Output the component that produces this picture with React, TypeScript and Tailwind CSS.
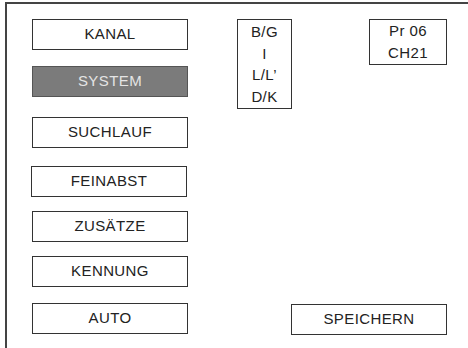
import React from "react";

const menu = [
  { label: "KANAL", mt: "mt-0", shift: "" },
  { label: "SYSTEM", mt: "mt-[16px]", shift: "", active: true },
  { label: "SUCHLAUF", mt: "mt-[20px]", shift: "" },
  { label: "FEINABST", mt: "mt-[18px]", shift: "-ml-px" },
  { label: "ZUSÄTZE", mt: "mt-[14px]", shift: "" },
  { label: "KENNUNG", mt: "mt-[14px]", shift: "" },
  { label: "AUTO", mt: "mt-[16px]", shift: "" },
];

function MenuButton({ label, active, className }: { label: string; active?: boolean; className?: string }) {
  return (
    <div
      className={
        "flex h-[31px] w-[156px] items-center justify-center border " +
        (active
          ? "border-[#555] bg-[#7b7b7b] text-[#e4e4e4] "
          : "border-[#333] bg-white text-[#222] ") +
        (className ?? "")
      }
    >
      {label}
    </div>
  );
}

export default function App() {
  return (
    <div
      className="h-[348px] w-[468px] overflow-hidden bg-white text-[15px] tracking-[0.4px]"
      style={{ fontFamily: '"Liberation Sans", Arial, sans-serif' }}
    >
      <div className="ml-[5px] mt-[2px] flex h-[346px] border-l-2 border-t-2 border-[#444] pl-[25px] pt-[15px]">
        {/* left menu column */}
        <div className="flex flex-col">
          {menu.map((m) => (
            <MenuButton
              key={m.label}
              label={m.label}
              active={m.active}
              className={m.mt + " " + m.shift}
            />
          ))}
        </div>

        {/* right side */}
        <div className="ml-[49px] flex h-[316px] flex-col">
          <div className="flex items-start">
            <div className="flex w-[55px] flex-col items-center border border-[#333] pt-px leading-[21.7px] text-[#222]">
              <span>B/G</span>
              <span>I</span>
              <span>L/L’</span>
              <span>D/K</span>
            </div>
            <div className="ml-[77px] flex w-[78px] flex-col items-center border border-[#333] leading-[22px] text-[#222]">
              <span>Pr 06</span>
              <span>CH21</span>
            </div>
          </div>
          <MenuButton label="SPEICHERN" className="ml-[54px] mt-auto" />
        </div>
      </div>
    </div>
  );
}
